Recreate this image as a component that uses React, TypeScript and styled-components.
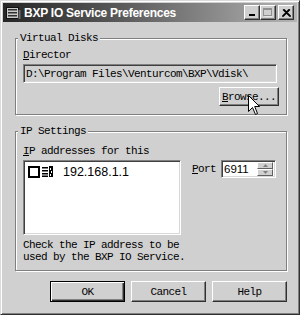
import React from 'react';
import styled, { createGlobalStyle } from 'styled-components';

const GlobalStyle = createGlobalStyle`
  html, body {
    margin: 0;
    padding: 0;
    background: #d0d0d0;
  }
  body {
    font-family: "Liberation Mono", monospace;
  }
`;

const Window = styled.div`
  position: relative;
  width: 300px;
  height: 315px;
  box-sizing: border-box;
  background: #d0d0d0;
  border: 1px solid;
  border-color: #dadada #303030 #303030 #dadada;
  box-shadow: inset 1px 1px 0 #fff, inset -1px -1px 0 #808080;
  padding: 2px;
  display: flex;
  flex-direction: column;
`;

const TitleBar = styled.div`
  height: 19px;
  display: flex;
  align-items: center;
  padding: 0 3px 0 2px;
  background: linear-gradient(to right, #262626 0%, #5a5a5a 40%, #b4b4b4 100%);
`;

const TitleIcon = styled.svg`
  width: 16px;
  height: 16px;
  margin-right: 3px;
  flex: none;
`;

const TitleText = styled.span`
  flex: 1;
  color: #fff;
  font-family: "Liberation Sans", Arial, sans-serif;
  font-weight: bold;
  font-size: 12px;
  letter-spacing: -0.25px;
  white-space: nowrap;
`;

const CaptionButtons = styled.div`
  display: flex;
  align-items: center;
`;

const CaptionButton = styled.div<{ $gap?: boolean; $disabled?: boolean }>`
  width: 16px;
  height: 15px;
  box-sizing: border-box;
  margin-left: ${(p) => (p.$gap ? '2px' : '0')};
  background: #d0d0d0;
  border: 1px solid;
  border-color: #fff #303030 #303030 #fff;
  box-shadow: inset -1px -1px 0 #808080;
  display: flex;
  align-items: center;
  justify-content: center;
  color: ${(p) => (p.$disabled ? '#909090' : '#000')};
`;

const Body = styled.div`
  flex: 1;
  display: flex;
  flex-direction: column;
  padding: 0 10px 0 12px;
  font-size: 11px;
  line-height: 12px;
  letter-spacing: -0.6px;
  color: #000;
`;

const Group = styled.fieldset<{ $top: number }>`
  margin: 10px 0 0 0;
  min-inline-size: 0;
  padding: ${(p) => p.$top}px 9px 0 7px;
  border: 1px solid #808080;
  box-shadow: 1px 1px 0 #fff, inset 1px 1px 0 #fff;
  display: flex;
  flex-direction: column;
`;

const Legend = styled.legend`
  margin-left: -5px;
  padding: 0 2px;
  height: 12px;
  line-height: 12px;
  background: #d0d0d0;
`;

const Label = styled.div`
  height: 12px;
  white-space: nowrap;
`;

const Key = styled.span`
  text-decoration: underline;
  text-underline-offset: 1px;
`;

const Sunken = styled.div<{ $white?: boolean }>`
  box-sizing: border-box;
  background: ${(p) => (p.$white ? '#fff' : '#d0d0d0')};
  border: 1px solid;
  border-color: #808080 #fff #fff #808080;
  box-shadow: inset 1px 1px 0 #404040, inset -1px -1px 0 #d8d8d8;
`;

const PathField = styled(Sunken)`
  margin-top: 3px;
  height: 19px;
  padding: 3px 3px 0 2px;
  white-space: nowrap;
  overflow: hidden;
`;

const BrowseRow = styled.div`
  display: flex;
  justify-content: flex-end;
  margin: 4px -2px 8px 0;
`;

const Button = styled.button<{ $default?: boolean; $w: number; $h: number }>`
  width: ${(p) => p.$w}px;
  height: ${(p) => p.$h}px;
  box-sizing: border-box;
  padding: 0;
  font: inherit;
  letter-spacing: inherit;
  color: #000;
  background: #d0d0d0;
  border: 1px solid;
  border-color: ${(p) => (p.$default ? '#000' : '#fff #303030 #303030 #fff')};
  box-shadow: ${(p) =>
    p.$default
      ? 'inset 1px 1px 0 #fff, inset -1px -1px 0 #303030, inset -2px -2px 0 #808080'
      : 'inset -1px -1px 0 #808080'};
  display: flex;
  align-items: center;
  justify-content: center;
`;

const IpRow = styled.div`
  display: flex;
  align-items: flex-start;
  margin-top: 3px;
`;

const ListBox = styled(Sunken)`
  width: 158px;
  height: 75px;
  padding: 3px 3px;
  flex: none;
`;

const ListItem = styled.div`
  display: flex;
  align-items: center;
  height: 13px;
  margin-top: 1px;
`;

const CheckBox = styled.div`
  width: 12px;
  height: 12px;
  box-sizing: border-box;
  border: 2px solid #000;
  background: #fff;
  margin-left: 1px;
  flex: none;
`;

const ItemIcon = styled.svg`
  width: 11px;
  height: 11px;
  margin-left: 2px;
  flex: none;
`;

const ItemText = styled.span`
  margin-left: 10px;
  font-family: "Liberation Sans", Arial, sans-serif;
  font-size: 12.5px;
  letter-spacing: 0;
`;

const PortGroup = styled.div`
  display: flex;
  align-items: center;
  height: 18px;
  margin-left: 11px;
`;

const PortField = styled(Sunken)`
  width: 55px;
  height: 18px;
  margin-left: 5px;
  padding: 2px;
  display: flex;
  align-items: center;
`;

const PortValue = styled.span`
  flex: 1;
  font-family: "Liberation Sans", Arial, sans-serif;
  font-size: 11.5px;
  letter-spacing: 0;
`;

const Spinner = styled.div`
  width: 16px;
  height: 14px;
  display: flex;
  flex-direction: column;
`;

const SpinButton = styled.div`
  flex: 1;
  box-sizing: border-box;
  background: #d0d0d0;
  border: 1px solid;
  border-color: #fff #606060 #606060 #fff;
  display: flex;
  align-items: center;
  justify-content: center;
`;

const Caption = styled.div`
  width: 170px;
  margin: 4px 0 7px;
`;

const ButtonRow = styled.div`
  display: flex;
  justify-content: flex-end;
  gap: 6px;
  margin-top: 10px;
`;

const Cursor = styled.svg`
  position: absolute;
  left: 247px;
  top: 94px;
  width: 13px;
  height: 21px;
`;

const App: React.FC = () => {
  return (
    <>
      <GlobalStyle />
      <Window>
        <TitleBar>
          <TitleIcon viewBox="0 0 16 16">
            <rect x="1.5" y="2.5" width="12" height="11" fill="#c8c8c8" stroke="#101010" />
            <rect x="3" y="4" width="9" height="1.5" fill="#303030" />
            <rect x="3" y="7" width="9" height="1.5" fill="#303030" />
            <rect x="3" y="10" width="9" height="1.5" fill="#303030" />
            <rect x="13.5" y="5" width="2" height="9" fill="#707070" />
          </TitleIcon>
          <TitleText>BXP IO Service Preferences</TitleText>
          <CaptionButtons>
            <CaptionButton>
              <svg width="8" height="8" viewBox="0 0 8 8">
                <rect x="1" y="5" width="6" height="2" fill="#000" />
              </svg>
            </CaptionButton>
            <CaptionButton $disabled>
              <svg width="10" height="9" viewBox="0 0 10 9">
                <rect x="0.5" y="0.5" width="8" height="7" fill="none" stroke="#909090" />
                <rect x="0.5" y="0.5" width="8" height="1.5" fill="#909090" />
                <rect x="1.5" y="8.5" width="8" height="0.5" fill="#fff" />
              </svg>
            </CaptionButton>
            <CaptionButton $gap>
              <svg width="9" height="8" viewBox="0 0 9 8">
                <path d="M1 0.5 L8 7.5 M8 0.5 L1 7.5 M2 0.5 L9 7.5 M7 0.5 L0 7.5" stroke="#000" strokeWidth="1.1" />
              </svg>
            </CaptionButton>
          </CaptionButtons>
        </TitleBar>

        <Body>
          <Group $top={5}>
            <Legend>Virtual Disks</Legend>
            <Label>
              <Key>D</Key>irector
            </Label>
            <PathField>D:\Program Files\Venturcom\BXP\Vdisk\</PathField>
            <BrowseRow>
              <Button $w={60} $h={19}>
                <Key>B</Key>rowse...
              </Button>
            </BrowseRow>
          </Group>

          <Group $top={8}>
            <Legend>IP Settings</Legend>
            <Label>
              <Key>I</Key>P addresses for this
            </Label>
            <IpRow>
              <ListBox $white>
                <ListItem>
                  <CheckBox />
                  <ItemIcon viewBox="0 0 11 11">
                    <rect x="0" y="1" width="6" height="1.5" fill="#000" />
                    <rect x="0" y="4" width="6" height="1.5" fill="#000" />
                    <rect x="0" y="7" width="6" height="1.5" fill="#000" />
                    <rect x="0" y="9.5" width="6" height="1.5" fill="#000" />
                    <rect x="7" y="0" width="4" height="11" fill="#000" />
                    <rect x="8" y="2" width="1" height="2" fill="#fff" />
                    <rect x="9" y="5" width="1" height="2" fill="#fff" />
                    <rect x="8" y="8" width="1" height="2" fill="#fff" />
                  </ItemIcon>
                  <ItemText>192.168.1.1</ItemText>
                </ListItem>
              </ListBox>
              <PortGroup>
                <span>
                  <Key>P</Key>ort
                </span>
                <PortField $white>
                  <PortValue>6911</PortValue>
                  <Spinner>
                    <SpinButton>
                      <svg width="5" height="3" viewBox="0 0 5 3">
                        <path d="M2.5 0 L5 3 L0 3 Z" fill="#808080" />
                      </svg>
                    </SpinButton>
                    <SpinButton>
                      <svg width="5" height="3" viewBox="0 0 5 3">
                        <path d="M0 0 L5 0 L2.5 3 Z" fill="#808080" />
                      </svg>
                    </SpinButton>
                  </Spinner>
                </PortField>
              </PortGroup>
            </IpRow>
            <Caption>Check the IP address to be used by the BXP IO Service.</Caption>
          </Group>

          <ButtonRow>
            <Button $default $w={75} $h={21}>
              OK
            </Button>
            <Button $w={75} $h={21}>
              Cancel
            </Button>
            <Button $w={75} $h={21}>
              Help
            </Button>
          </ButtonRow>
        </Body>

        <Cursor viewBox="0 0 13 21">
          <path
            d="M0.5 0.5 L0.5 16.5 L4.5 12.5 L7.5 19.5 L9.5 18.5 L6.7 11.5 L11.5 11.5 Z"
            fill="#fff"
            stroke="#000"
            strokeWidth="1"
          />
        </Cursor>
      </Window>
    </>
  );
};

export default App;
